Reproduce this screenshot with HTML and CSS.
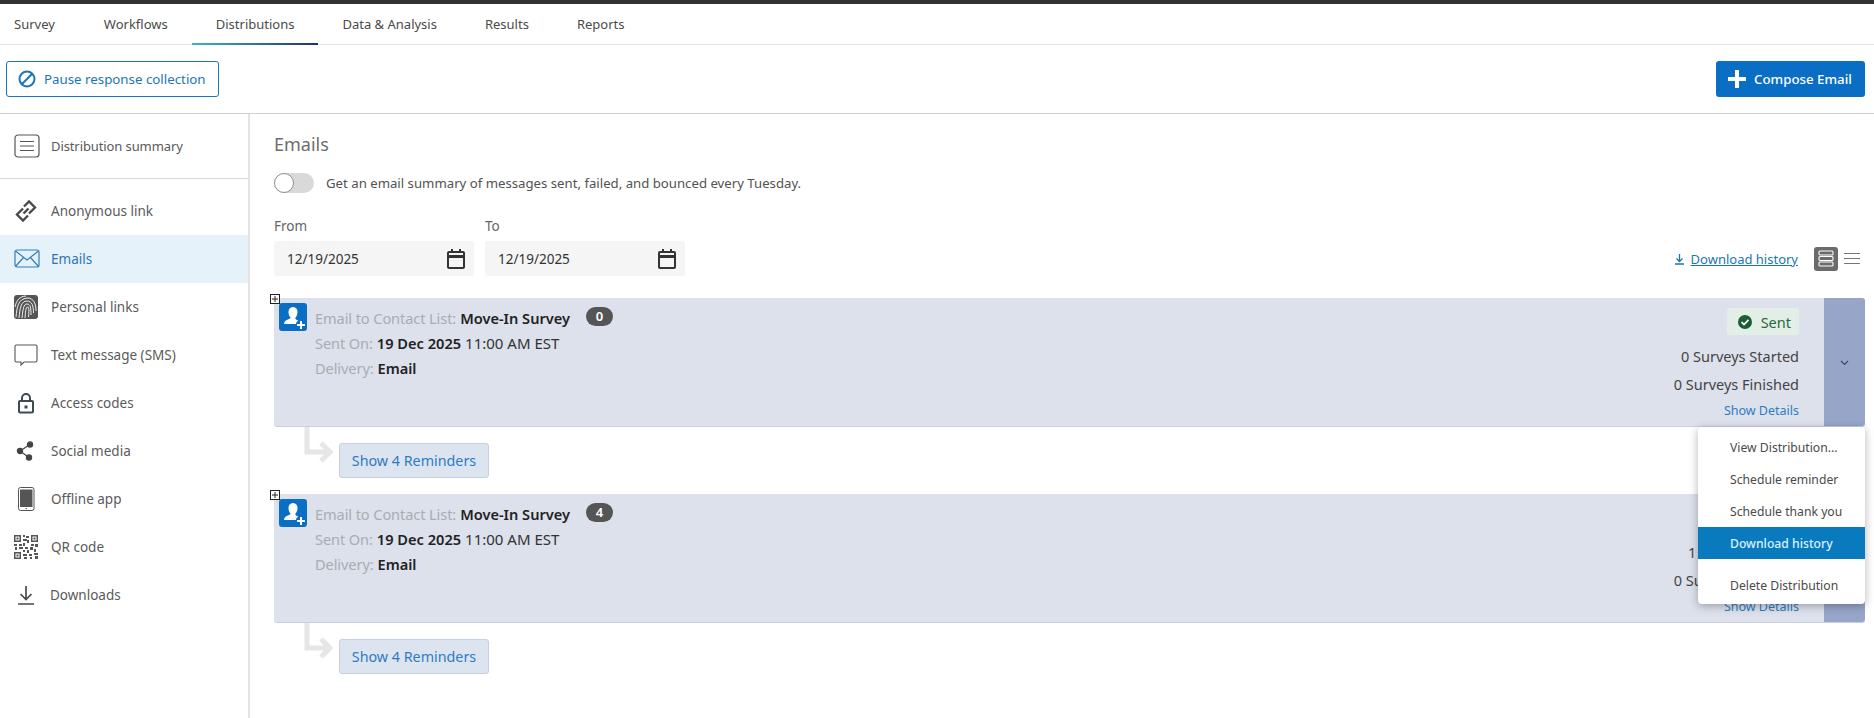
FILE: index.html
```html
<!DOCTYPE html>
<html lang="en">
<head>
    <meta charset="UTF-8">
    <meta name="viewport" content="width=device-width, initial-scale=1.0">
    <title>Distributions</title>
    <link rel="stylesheet" href="styles.css">
</head>
<body>
    <nav class="tabs">
        <a class="tab">Survey</a>
        <a class="tab">Workflows</a>
        <a class="tab active">Distributions</a>
        <a class="tab">Data &amp; Analysis</a>
        <a class="tab">Results</a>
        <a class="tab">Reports</a>
    </nav>

    <div class="toolbar">
        <button class="btn-pause">
            <svg width="18" height="18" viewBox="0 0 18 18" fill="none" stroke="#1a76b8" stroke-width="2"><circle cx="9" cy="9" r="7.500"/><path d="M3.800 14.200 14.200 3.800"/></svg>
            Pause response collection
        </button>
        <button class="btn-compose">
            <svg width="18" height="18" viewBox="0 0 18 18" fill="#fff"><path d="M7 0h4v7h7v4h-7v7H7v-7H0V7h7z"/></svg>
            Compose Email
        </button>
    </div>

    <div class="layout">
        <aside class="sidebar">
            <a class="side-item side-summary">
                <svg width="26" height="24" viewBox="0 0 26 24" fill="none" stroke="#555"><rect x="1" y="1" width="24" height="22" rx="3" stroke-width="1.200"/><path d="M6 7.500h14M6 12h14M6 16.500h14"/></svg>
                <span>Distribution summary</span>
            </a>
            <div class="side-list">
                <a class="side-item">
                    <svg width="24" height="24" viewBox="0 0 24 24" fill="none" stroke="#4a4a4a" stroke-width="2.400"><path d="M9 9.500 3 15.500 9 21.500 14 16.500M15 14.500 21 8.500 15 2.500 10 7.500M9.500 14.500 14.500 9.500"/></svg>
                    <span>Anonymous link</span>
                </a>
                <a class="side-item side-wide current">
                    <svg width="26" height="20" viewBox="0 0 26 20" fill="none" stroke="#2f7fbd" stroke-width="1.200"><rect x="1" y="1" width="24" height="17" rx="2"/><path d="M1.500 2 13 11 24.500 2M1.500 17.500 9.500 8.500M24.500 17.500 16.500 8.500"/></svg>
                    <span>Emails</span>
                </a>
                <a class="side-item">
                    <svg width="24" height="24" viewBox="0 0 24 24" fill="none"><rect width="24" height="24" rx="3" fill="#555"/><g stroke="#fff" stroke-width=".9"><path d="M2 22C3 12 4 4 13 3c7 0 9 6 9 13"/><path d="M5 23C6 13 7 6 13 6c5 0 6.500 5 6.500 12"/><path d="M8 23C9 14 9.500 9 13 9c3.500 0 4 4 4 11"/><path d="M11 23c.5-5 .5-11 2.500-11s1.500 5 1 10"/><path d="M1 12C2 6 6 1 12 1"/></g></svg>
                    <span>Personal links</span>
                </a>
                <a class="side-item">
                    <svg width="24" height="22" viewBox="0 0 24 22" fill="none" stroke="#555" stroke-width="1.100"><path d="M2.500 1h19A1.500 1.500 0 0 1 23 2.500v14a1.500 1.500 0 0 1-1.500 1.500H10l-3 3v-3H2.500A1.500 1.500 0 0 1 1 16.500v-14A1.500 1.500 0 0 1 2.500 1z"/></svg>
                    <span>Text message (SMS)</span>
                </a>
                <a class="side-item">
                    <svg width="24" height="22" viewBox="0 0 24 22" fill="none"><path d="M8 9V6a4 4 0 0 1 8 0v3" stroke="#3e4a50" stroke-width="2"/><rect x="5" y="9" width="14" height="11.500" rx="1" stroke="#3e4a50" stroke-width="2"/><rect x="10.500" y="13.500" width="3" height="3" fill="#3e4a50"/></svg>
                    <span>Access codes</span>
                </a>
                <a class="side-item">
                    <svg width="24" height="22" viewBox="0 0 24 22" fill="#444" stroke="#444" stroke-width="1.200"><circle cx="6" cy="11" r="2.600"/><circle cx="16" cy="4.500" r="2.600"/><circle cx="15" cy="17.500" r="2.600"/><path d="M6 11 16 4.500M6 11l9 6.500"/></svg>
                    <span>Social media</span>
                </a>
                <a class="side-item">
                    <svg width="24" height="24" viewBox="0 0 24 24"><rect x="4.500" y=".5" width="15.500" height="23" rx="2" fill="#fff" stroke="#555"/><rect x="6" y="2.500" width="12.500" height="17.500" fill="#555"/><rect x="11.500" y="21.200" width="1.500" height="1" fill="#555"/></svg>
                    <span>Offline app</span>
                </a>
                <a class="side-item">
                    <svg width="24" height="24" viewBox="0 0 24 24" fill="#555"><path d="M0 0h7v7H0zM1.500 1.500v4h4v-4zM17 0h7v7h-7zM18.500 1.500v4h4v-4zM0 17h7v7H0zM1.500 18.500v4h4v-4z" fill-rule="evenodd"/><path d="M2.500 2.500h2v2h-2zM19.500 2.500h2v2h-2zM2.500 19.500h2v2h-2zM9 0h2v2H9zM12 1h3v2h-3zM9 4h4v2H9zM13 5h2v3h-2zM0 9h3v2H0zM5 9h3v2H5zM9 8h2v3H9zM17 9h3v2h-3zM21 9h3v3h-3zM1 12h2v3H1zM5 12h4v2H5zM11 12h3v2h-3zM16 12h3v3h-3zM9 15h2v2H9zM13 15h2v3h-2zM20 14h2v3h-2zM9 19h4v2H9zM15 19h3v2h-3zM20 18h4v2h-4zM10 22h3v2h-3zM16 22h2v2h-2zM21 21h3v3h-3z"/></svg>
                    <span>QR code</span>
                </a>
                <a class="side-item side-downloads">
                    <svg width="24" height="22" viewBox="0 0 24 22" fill="none" stroke="#4a4a4a" stroke-width="1.700"><path d="M12 2v13M6.500 10 12 15.500 17.500 10M4 20h16"/></svg>
                    <span>Downloads</span>
                </a>
            </div>
        </aside>

        <main class="content">
            <h1 class="title">Emails</h1>
            <div class="summary-row">
                <span class="toggle"><span class="knob"></span></span>
                <span>Get an email summary of messages sent, failed, and bounced every Tuesday.</span>
            </div>
            <div class="filter-row">
                <div class="date-field">
                    <label>From</label>
                    <div class="date-input">12/19/2025
                        <svg width="18" height="20" viewBox="0 0 18 20" fill="none" stroke="#333" stroke-width="2"><rect x="1" y="3" width="16" height="16" rx="1"/><path d="M1 7.500h16" stroke-width="3"/><path d="M5 0v4M13 0v4"/></svg>
                    </div>
                </div>
                <div class="date-field">
                    <label>To</label>
                    <div class="date-input">12/19/2025
                        <svg width="18" height="20" viewBox="0 0 18 20" fill="none" stroke="#333" stroke-width="2"><rect x="1" y="3" width="16" height="16" rx="1"/><path d="M1 7.500h16" stroke-width="3"/><path d="M5 0v4M13 0v4"/></svg>
                    </div>
                </div>
                <div class="history">
                    <svg width="11" height="12" viewBox="0 0 11 12" fill="none" stroke="#1a76b8" stroke-width="1.300"><path d="M5.500 1v7M2.500 5.500l3 3 3-3M1 11h9"/></svg>
                    <a class="history-link">Download history</a>
                    <span class="view-btn">
                        <svg width="16" height="17" viewBox="0 0 16 17" fill="none" stroke="#fff" stroke-width="1.100"><rect x="1" y="1" width="14" height="4" rx="1"/><rect x="1" y="6.500" width="14" height="4" rx="1"/><rect x="1" y="12" width="14" height="4" rx="1"/></svg>
                    </span>
                    <svg class="view-list" width="16" height="11" viewBox="0 0 16 11" fill="none" stroke="#777" stroke-width="1"><path d="M0 .5h16M0 5.500h16M0 10.500h16"/></svg>
                </div>
            </div>

            <div class="cards">
                <section class="dist">
                    <div class="card">
                        <svg class="expand" width="10" height="10" viewBox="0 0 10 10" fill="#fff" stroke="#222"><rect x=".5" y=".5" width="9" height="9"/><path d="M2 5h6M5 2v6"/></svg>
                        <svg class="person" width="28" height="28" viewBox="0 0 28 28"><rect width="28" height="28" rx="3" fill="#0b6ec5"/><path d="M14 4c3 0 4.500 2.200 4.500 5s-1.300 5-2.300 6c0 1.200 1.500 2 3.300 2.700-1.800.6-2.600 2-2.400 3.300H5c0-3 2-3.900 4-4.600 1.500-.5 2.500-1 2.600-1.600-1-1-2.100-3-2.100-5.800S11 4 14 4z" fill="#fff"/><path d="M21 18h2v3h3v2h-3v3h-2v-3h-3v-2h3z" fill="#fff"/></svg>
                        <div class="info">
                            <div class="line"><span class="muted">Email to Contact List:</span> <b>Move-In Survey</b> <span class="count">0</span></div>
                            <div class="line"><span class="muted">Sent On:</span> <b>19 Dec 2025</b> <span class="time">11:00 AM EST</span></div>
                            <div class="line"><span class="muted">Delivery:</span> <b>Email</b></div>
                        </div>
                        <div class="stats">
                            <span class="sent">
                                <svg width="14" height="14" viewBox="0 0 14 14"><circle cx="7" cy="7" r="7" fill="#1b5e36"/><path d="M3.500 7.200 6 9.500l4.500-4.700" fill="none" stroke="#fff" stroke-width="1.700"/></svg>
                                Sent
                            </span>
                            <span class="stat stat-first">0 Surveys Started</span>
                            <span class="stat">0 Surveys Finished</span>
                            <a class="details">Show Details</a>
                        </div>
                        <div class="strip">
                            <svg width="9" height="6" viewBox="0 0 9 6" fill="none" stroke="#3c4a6b" stroke-width="1.200"><path d="M1 1l3.500 3.500L8 1"/></svg>
                        </div>
                    </div>
                    <div class="reminder-row">
                        <svg class="connector" width="30" height="36" viewBox="0 0 30 36" fill="none" stroke="#e6e6e6" stroke-width="5"><path d="M3 0v25h22M17 16l9 9-9 9"/></svg>
                        <button class="btn-reminders">Show 4 Reminders</button>
                    </div>
                </section>

                <section class="dist">
                    <div class="card">
                        <svg class="expand" width="10" height="10" viewBox="0 0 10 10" fill="#fff" stroke="#222"><rect x=".5" y=".5" width="9" height="9"/><path d="M2 5h6M5 2v6"/></svg>
                        <svg class="person" width="28" height="28" viewBox="0 0 28 28"><rect width="28" height="28" rx="3" fill="#0b6ec5"/><path d="M14 4c3 0 4.500 2.200 4.500 5s-1.300 5-2.300 6c0 1.200 1.500 2 3.300 2.700-1.800.6-2.600 2-2.400 3.300H5c0-3 2-3.900 4-4.600 1.500-.5 2.500-1 2.600-1.600-1-1-2.100-3-2.100-5.800S11 4 14 4z" fill="#fff"/><path d="M21 18h2v3h3v2h-3v3h-2v-3h-3v-2h3z" fill="#fff"/></svg>
                        <div class="info">
                            <div class="line"><span class="muted">Email to Contact List:</span> <b>Move-In Survey</b> <span class="count">4</span></div>
                            <div class="line"><span class="muted">Sent On:</span> <b>19 Dec 2025</b> <span class="time">11:00 AM EST</span></div>
                            <div class="line"><span class="muted">Delivery:</span> <b>Email</b></div>
                        </div>
                        <div class="stats">
                            <span class="sent">
                                <svg width="14" height="14" viewBox="0 0 14 14"><circle cx="7" cy="7" r="7" fill="#1b5e36"/><path d="M3.500 7.200 6 9.500l4.500-4.700" fill="none" stroke="#fff" stroke-width="1.700"/></svg>
                                Sent
                            </span>
                            <span class="stat stat-first">1 Survey Started</span>
                            <span class="stat">0 Surveys Finished</span>
                            <a class="details">Show Details</a>
                        </div>
                        <div class="strip">
                            <svg width="9" height="6" viewBox="0 0 9 6" fill="none" stroke="#3c4a6b" stroke-width="1.200"><path d="M1 1l3.500 3.500L8 1"/></svg>
                        </div>
                    </div>
                    <div class="reminder-row">
                        <svg class="connector" width="30" height="36" viewBox="0 0 30 36" fill="none" stroke="#e6e6e6" stroke-width="5"><path d="M3 0v25h22M17 16l9 9-9 9"/></svg>
                        <button class="btn-reminders">Show 4 Reminders</button>
                    </div>
                </section>

                <ul class="menu">
                    <li>View Distribution...</li>
                    <li>Schedule reminder</li>
                    <li>Schedule thank you</li>
                    <li class="highlight">Download history</li>
                    <li class="menu-last">Delete Distribution</li>
                </ul>
            </div>
        </main>
    </div>
</body>
</html>
```

FILE: styles.css
```css
* {
    box-sizing: border-box;
}
html, body {
    height: 100%;
}
body {
    margin: 0;
    font-family: "Noto Sans", Arial, sans-serif;
    font-size: 14px;
    color: #525252;
    background: #fff;
    border-top: 4px solid #333;
    display: flex;
    flex-direction: column;
    overflow: hidden;
}
svg {
    display: block;
    flex: none;
}

/* top tabs */
.tabs {
    display: flex;
    height: 41px;
    flex: none;
    border-bottom: 1px solid #e6e6e6;
}
.tab {
    padding: 0 24px;
    line-height: 40px;
    height: 41px;
    font-size: 13px;
    color: #4a4a4a;
}
.tab:first-child {
    padding: 0 25px 0 14px;
}
.tab.active {
    border-bottom: 2px solid;
    border-image: linear-gradient(90deg, #3fb6c6, #1f2f78) 1;
}

/* toolbar */
.toolbar {
    display: flex;
    justify-content: space-between;
    align-items: center;
    height: 69px;
    flex: none;
    padding: 0 9px 0 6px;
    border-bottom: 1px solid #cfcfcf;
}
.btn-pause, .btn-compose {
    display: flex;
    align-items: center;
    height: 36px;
    border-radius: 3px;
    font-family: inherit;
    font-size: 13.300px;
    white-space: nowrap;
}
.btn-pause {
    width: 213px;
    gap: 8px;
    padding: 0 11px;
    background: #fff;
    color: #1a76b8;
    border: 1px solid #1a76b8;
}
.btn-compose {
    width: 149px;
    gap: 8px;
    padding: 0 12px;
    background: #0b6ec5;
    color: #fff;
    border: none;
    font-weight: 500;
}

.layout {
    display: flex;
    flex: 1;
    min-height: 0;
}

/* left nav */
.sidebar {
    width: 250px;
    flex: none;
    border-right: 2px solid #e3e3e3;
}
.side-item {
    display: flex;
    align-items: center;
    gap: 13px;
    height: 48px;
    padding-left: 14px;
    color: #5a5a5a;
    font-size: 13.500px;
}
.side-summary {
    height: 65px;
    gap: 11px;
    font-size: 13px;
    letter-spacing: -0.1px;
    border-bottom: 1px solid #d8d8d8;
}
.side-wide {
    gap: 11px;
}
.side-list {
    padding-top: 8px;
}
.side-item.current {
    background: #e6f2fa;
    color: #2a76b5;
}
.side-downloads {
    gap: 12px;
}

/* main area */
.content {
    flex: 1;
    padding: 18px 9px 0 24px;
    min-width: 0;
}
.title {
    margin: 0;
    font-size: 18px;
    font-weight: 400;
    line-height: 24px;
    color: #6d6d6d;
}
.summary-row {
    display: flex;
    align-items: center;
    gap: 12px;
    margin-top: 17px;
    height: 20px;
    font-size: 13.200px;
}
.toggle {
    width: 40px;
    height: 20px;
    border-radius: 10px;
    background: #d9d9d9;
    display: block;
}
.knob {
    display: block;
    width: 20px;
    height: 20px;
    border-radius: 50%;
    background: #fff;
    border: 1px solid #8f8f8f;
}
.filter-row {
    display: flex;
    gap: 11px;
    align-items: flex-end;
    margin-top: 24px;
}
.date-field label {
    display: block;
    font-size: 13.500px;
    line-height: 18px;
    margin-bottom: 6px;
    color: #666;
}
.date-input {
    display: flex;
    justify-content: space-between;
    align-items: center;
    width: 200px;
    height: 35px;
    padding: 0 9px 0 13px;
    background: #f5f5f5;
    border-radius: 3px;
    color: #333;
    font-size: 13.500px;
}
.history {
    flex: 1;
    display: flex;
    align-items: center;
    justify-content: flex-end;
    height: 35px;
    padding-right: 5px;
}
.history-link {
    margin-left: 6px;
    color: #1a76b8;
    font-size: 13px;
    text-decoration: underline;
}
.view-btn {
    width: 24px;
    height: 24px;
    margin-left: 16px;
    background: #6b6b6b;
    border-radius: 3px;
    display: flex;
    align-items: center;
    justify-content: center;
}
.view-list {
    margin-left: 6px;
}

/* distribution cards */
.cards {
    position: relative;
    margin-top: 22px;
}
.card {
    position: relative;
    display: flex;
    height: 129px;
    background: #dce1eb;
    border-radius: 3px;
    border-bottom: 1px solid #c9d0dd;
}
.expand {
    position: absolute;
    left: -4px;
    top: -4px;
}
.person {
    margin: 5px 0 0 5px;
}
.info {
    flex: 1;
    padding: 8px 0 0 8px;
    font-size: 14.600px;
    color: #333;
}
.line {
    height: 25px;
    line-height: 25px;
    display: flex;
    gap: 4px;
}
.muted {
    color: #a9adb3;
    letter-spacing: -0.1px;
}
.line b {
    color: #222;
    font-weight: 600;
}
.time {
    font-size: 15px;
}
.count {
    margin-left: 12px;
    width: 27px;
    height: 19px;
    margin-top: 1px;
    border-radius: 10px;
    background: #555;
    color: #fff;
    font-size: 13px;
    font-weight: 600;
    line-height: 19px;
    text-align: center;
}
.stats {
    display: flex;
    flex-direction: column;
    align-items: flex-end;
    padding: 10px 25px 0 0;
    font-size: 14.500px;
    color: #444;
}
.sent {
    display: flex;
    align-items: center;
    gap: 9px;
    height: 27px;
    padding: 0 8px 0 11px;
    background: #e2eee6;
    border-radius: 3px;
    color: #1f6a3d;
}
.stat {
    line-height: 28px;
}
.stat-first {
    margin-top: 7px;
}
.details {
    line-height: 26px;
    font-size: 12.500px;
    color: #2f7bc4;
}
.strip {
    width: 41px;
    padding-top: 2px;
    background: #97a6c8;
    border-radius: 0 3px 3px 0;
    display: flex;
    align-items: center;
    justify-content: center;
}
.reminder-row {
    display: flex;
    align-items: flex-start;
    height: 67px;
    padding-left: 30px;
}
.connector {
    margin-right: 5px;
}
.btn-reminders {
    width: 150px;
    height: 35px;
    margin-top: 16px;
    background: #dce4ef;
    border: 1px solid #c5d1e2;
    border-radius: 3px;
    color: #2f7bc4;
    font-family: inherit;
    font-size: 14.300px;
}

/* open dropdown */
.menu {
    position: absolute;
    top: 129px;
    right: 0;
    width: 167px;
    margin: 0;
    padding: 4px 0 3px;
    list-style: none;
    background: #fff;
    border-radius: 4px;
    box-shadow: 0 2px 10px rgba(0, 0, 0, 0.3);
    font-size: 12.200px;
    color: #4a4a4a;
}
.menu li {
    height: 32px;
    line-height: 33px;
    padding-left: 32px;
}
.menu .highlight {
    background: #0a7abf;
    color: #d9f2ff;
    font-weight: 500;
}
.menu .menu-last {
    margin-top: 10px;
}
```
